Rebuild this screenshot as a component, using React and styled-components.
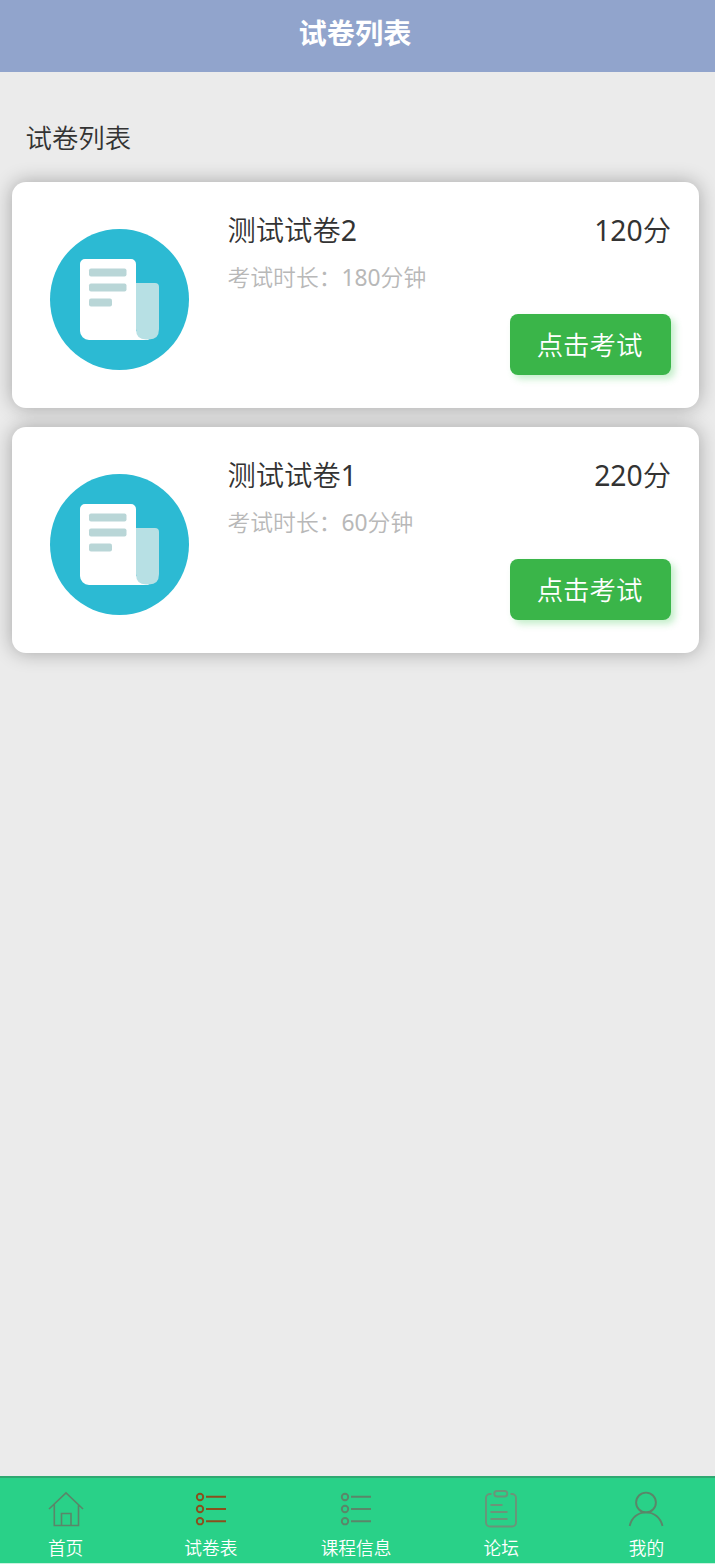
import React from 'react';
import styled, { createGlobalStyle } from 'styled-components';

const GlobalStyle = createGlobalStyle`
  * {
    box-sizing: border-box;
  }

  body {
    margin: 0;
    background: #ebebeb;
    color: #333;
    font-family: "Noto Sans", "Noto Sans CJK SC", sans-serif;
    font-weight: 350;
  }
`;

const Page = styled.div`
  display: flex;
  flex-direction: column;
  height: 1564px;
  overflow: hidden;
  background: #ebebeb;
`;

const Header = styled.header`
  height: 72px;
  padding-right: 5px;
  background: #91a4cc;
  color: #fff;
  font-size: 28.2px;
  font-weight: 700;
  line-height: 66px;
  text-align: center;
`;

const Content = styled.main`
  flex: 1;
  padding: 46px 16px 0 12px;
`;

const SectionTitle = styled.h2`
  margin: 0 0 24px;
  padding-left: 13.5px;
  font-size: 26.4px;
  font-weight: inherit;
  line-height: 40px;
`;

const Card = styled.section`
  display: flex;
  height: 226px;
  margin-bottom: 19px;
  padding: 28px 28px 0 38px;
  border-radius: 14px;
  background: #fff;
  box-shadow: 0 0 19px rgba(0, 0, 0, 0.3);
`;

const PaperIcon = styled.svg`
  flex: none;
  width: 140px;
  height: 142px;
  margin: 19px 37.5px 0 0;
`;

const Info = styled.div`
  display: flex;
  flex: 1;
  flex-direction: column;
`;

const TitleRow = styled.div`
  display: flex;
  justify-content: space-between;
  font-size: 28.3px;
  line-height: 40px;
`;

const Digits = styled.span`
  font-weight: 400;
`;

const Duration = styled.div`
  margin-top: 10px;
  color: #b8b8b8;
  font-size: 22.8px;
  line-height: 36px;
`;

const ExamButton = styled.button`
  align-self: flex-end;
  width: 161px;
  height: 61px;
  margin-top: 18px;
  padding: 0 2px 2px 0;
  border: 0;
  border-radius: 8px;
  background: #3ab549;
  box-shadow: 4px 4px 7px rgba(58, 200, 80, 0.3);
  color: #fff;
  font-family: inherit;
  font-size: 26.4px;
  font-weight: inherit;
`;

const TabBar = styled.nav`
  display: flex;
  height: 88px;
  margin: 0 -4px 0 -7px;
  border-top: 2px solid #2fa871;
  border-bottom: 1px solid #c9f2df;
  background: #29d188;
`;

const Tab = styled.a`
  display: flex;
  flex: 1;
  flex-direction: column;
  align-items: center;
  padding-top: 11px;
  color: #fff;
  font-size: 17.7px;
  line-height: 28px;
`;

const TabIcon = styled.svg`
  width: 40px;
  height: 40px;
  margin-bottom: 5px;
  fill: none;
  stroke: ${({ $color }) => $color || '#5a8669'};
  stroke-width: ${({ $weight }) => $weight || 1.6};
`;

const Paper = () => (
  <PaperIcon viewBox="0 0 140 142">
    <ellipse cx="69.5" cy="70.5" rx="69.5" ry="70.5" fill="#2cbad3" />
    <path d="M99 111H39a9 9 0 0 1-9-9V35a5 5 0 0 1 5-5h46a5 5 0 0 1 5 5v67z" fill="#fff" />
    <path d="M86 102v9h13z" fill="#fff" />
    <path d="M86 54h19a4 4 0 0 1 4 4v42q0 10.500-10 10.500h-3q-10 0-10-10.500z" fill="#b7e0e4" />
    <g fill="#b9d6d7">
      <rect x="39" y="39.500" width="37.500" height="8" rx="2" />
      <rect x="39" y="54.500" width="37.500" height="8" rx="2" />
      <rect x="39" y="69.500" width="23" height="8" rx="2" />
    </g>
  </PaperIcon>
);

const HomeIcon = () => (
  <TabIcon viewBox="0 0 40 40">
    <path d="M3 20 20 3.800l17 16.200M8.300 15.500v21h24.200v-21M15.500 36.500V24.500h9.500v12" />
  </TabIcon>
);

const ListIcon = ({ color }) => (
  <TabIcon viewBox="0 0 40 40" $color={color} $weight={1.9}>
    <circle cx="9" cy="8" r="3.200" />
    <circle cx="9" cy="20" r="3.200" />
    <circle cx="9" cy="32.200" r="3.200" />
    <path d="M15 7.800h20M15 20h20M15 32.200h20" />
  </TabIcon>
);

const ForumIcon = () => (
  <TabIcon viewBox="0 0 40 40" $color="#6b9479" $weight={1.9}>
    <path d="M10.500 5H9a4 4 0 0 0-4 4V33.500a4 4 0 0 0 4 4h22a4 4 0 0 0 4-4V9a4 4 0 0 0-4-4h-1.500" />
    <rect x="13.300" y="2" width="13" height="5.500" rx="2.700" />
    <path d="M9.500 16h12M9.500 23h17M9.500 30h17" />
  </TabIcon>
);

const UserIcon = () => (
  <TabIcon viewBox="0 0 40 40" $weight={1.9}>
    <circle cx="20" cy="13.500" r="9.900" />
    <path d="M3.700 37C5.500 28.500 12 23.400 20 23.400S34.500 28.500 36.500 37" />
  </TabIcon>
);

const papers = [
  { name: '测试试卷', no: 2, score: 120, minutes: 180 },
  { name: '测试试卷', no: 1, score: 220, minutes: 60 },
];

const App = () => (
  <>
    <GlobalStyle />
    <Page>
      <Header>试卷列表</Header>
      <Content>
        <SectionTitle>试卷列表</SectionTitle>
        {papers.map((paper) => (
          <Card key={paper.no}>
            <Paper />
            <Info>
              <TitleRow>
                <span>{paper.name}<Digits>{paper.no}</Digits></span>
                <span><Digits>{paper.score}</Digits>分</span>
              </TitleRow>
              <Duration>考试时长：<Digits>{paper.minutes}</Digits>分钟</Duration>
              <ExamButton>点击考试</ExamButton>
            </Info>
          </Card>
        ))}
      </Content>
      <TabBar>
        <Tab><HomeIcon />首页</Tab>
        <Tab><ListIcon color="#8b4f1c" />试卷表</Tab>
        <Tab><ListIcon />课程信息</Tab>
        <Tab><ForumIcon />论坛</Tab>
        <Tab><UserIcon />我的</Tab>
      </TabBar>
    </Page>
  </>
);

export default App;
